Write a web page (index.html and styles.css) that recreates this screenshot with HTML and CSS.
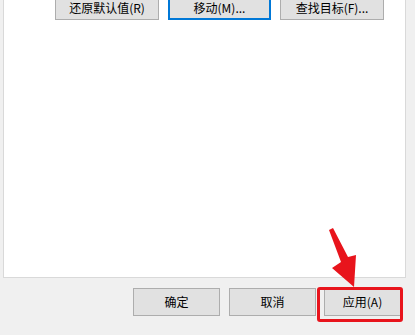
FILE: index.html
```html
<!DOCTYPE html>
<html lang="zh-CN">
<head>
<meta charset="utf-8">
<link rel="stylesheet" href="styles.css">
</head>
<body>
<div class="dialog">
  <div class="panel">
    <div class="top-row">
      <button class="btn wide">还原默认值(R)</button>
      <button class="btn wide focused">移动(M)...</button>
      <button class="btn wide">查找目标(F)...</button>
    </div>
  </div>
  <div class="bottom-row">
    <button class="btn">确定</button>
    <button class="btn">取消</button>
    <button class="btn apply">应用(A)</button>
  </div>
  <div class="highlight"></div>
  <svg class="arrow" width="40" height="64" viewBox="0 0 40 64">
    <polygon points="1,2 5,0 20,29 28,27 26,59 4,40 13,34" fill="#e8141c"/>
  </svg>
</div>
</body>
</html>
```
FILE: styles.css
```css
html, body {
  margin: 0;
  padding: 0;
  background: #f0f0f0;
  width: 415px;
  height: 335px;
  overflow: hidden;
}
body {
  font-family: "Noto Sans CJK SC", "Noto Sans", sans-serif;
  font-size: 12px;
  color: #000;
}
.dialog {
  position: relative;
  width: 415px;
  height: 335px;
  padding-left: 3px;
  box-sizing: border-box;
}
.panel {
  width: 403px;
  height: 286px;
  box-sizing: border-box;
  background: #fff;
  border: 1px solid #d9d9d9;
  border-top: none;
}
.top-row {
  display: flex;
  gap: 9px;
  padding-left: 51px;
  margin-top: -8px;
}
.btn {
  font-family: inherit;
  font-size: 12px;
  color: #000;
  background: #e1e1e1;
  border: 1px solid #adadad;
  height: 28px;
  width: 87px;
  padding: 0;
  margin: 0;
  box-sizing: border-box;
  display: flex;
  align-items: center;
  justify-content: center;
  line-height: 1;
}
.btn.wide {
  width: 104px;
  padding-top: 3px;
}
.btn.focused {
  border: 2px solid #0078d7;
  width: 103px;
}
.bottom-row {
  display: flex;
  gap: 9px;
  margin-top: 10px;
  padding-left: 130px;
}
.btn.apply {
  width: 77px;
  margin-left: -1px;
}
.highlight {
  position: absolute;
  left: 317px;
  top: 295px;
  width: 86px;
  height: 35px;
  box-sizing: border-box;
  border: 3px solid #e8141c;
  border-radius: 3px;
}
.arrow {
  position: absolute;
  left: 328px;
  top: 236px;
}
```
